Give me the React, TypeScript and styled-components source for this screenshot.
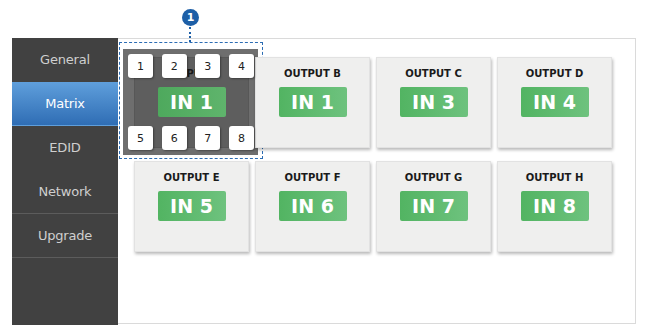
import styled, { createGlobalStyle } from "styled-components";

const menu = ["General", "Matrix", "EDID", "Network", "Upgrade"];
const outputs = [
  { name: "A", input: 1 },
  { name: "B", input: 1 },
  { name: "C", input: 3 },
  { name: "D", input: 4 },
  { name: "E", input: 5 },
  { name: "F", input: 6 },
  { name: "G", input: 7 },
  { name: "H", input: 8 },
];

export default function App() {
  return (
    <>
      <GlobalStyle />
      <Page>
        <Sidebar>
          {menu.map((item) => (
            <MenuItem
              key={item}
              $active={item === "Matrix"}
              $divided={item === "Network" || item === "Upgrade"}
            >
              {item}
            </MenuItem>
          ))}
        </Sidebar>
        <Panel>
          <Grid>
            {outputs.map((o, i) => (
              <Slot key={o.name}>
                <Card $selected={i === 0}>
                  <Title>OUTPUT {o.name}</Title>
                  <Badge $selected={i === 0}>IN {o.input}</Badge>
                </Card>
                {i === 0 && (
                  <Selection>
                    <Marker>1</Marker>
                    <Frame>
                      <ButtonRow>
                        {[1, 2, 3, 4].map((n) => (
                          <InputButton key={n}>{n}</InputButton>
                        ))}
                      </ButtonRow>
                      <ButtonRow>
                        {[5, 6, 7, 8].map((n) => (
                          <InputButton key={n}>{n}</InputButton>
                        ))}
                      </ButtonRow>
                    </Frame>
                  </Selection>
                )}
              </Slot>
            ))}
          </Grid>
        </Panel>
      </Page>
    </>
  );
}

const GlobalStyle = createGlobalStyle`
  body {
    margin: 0;
    background: #ffffff;
    font-family: "DejaVu Sans", Verdana, sans-serif;
  }
`;

const Page = styled.div`
  display: flex;
  width: 650px;
  height: 335px;
  box-sizing: border-box;
  padding: 38px 0 10px 12px;
`;

const Sidebar = styled.nav`
  width: 106px;
  height: 287px;
  background: #414141;
  display: flex;
  flex-direction: column;
`;

const MenuItem = styled.div<{ $active?: boolean; $divided?: boolean }>`
  height: 44px;
  box-sizing: border-box;
  display: flex;
  align-items: center;
  justify-content: center;
  font-size: 13px;
  letter-spacing: -0.2px;
  color: ${(p) => (p.$active ? "#ffffff" : "#cfcfcf")};
  background: ${(p) =>
    p.$active ? "linear-gradient(to bottom, #5f9fdc, #2f6db4)" : "transparent"};
  border-bottom: 1px solid ${(p) => (p.$divided ? "#5c5c5c" : "transparent")};
`;

const Panel = styled.main`
  width: 518px;
  height: 286px;
  box-sizing: border-box;
  background: #ffffff;
  border: 1px solid #dadada;
  border-left: none;
  padding: 18px 0 0 16px;
`;

const Grid = styled.div`
  display: grid;
  grid-template-columns: repeat(4, 115px);
  grid-auto-rows: 91px;
  column-gap: 6px;
  row-gap: 13px;
`;

const Slot = styled.div`
  position: relative;
`;

const Card = styled.div<{ $selected?: boolean }>`
  position: relative;
  z-index: 1;
  height: 100%;
  box-sizing: border-box;
  display: flex;
  flex-direction: column;
  align-items: center;
  padding-top: 10px;
  background: ${(p) => (p.$selected ? "#5e5e5e" : "#efefee")};
  border: 1px solid ${(p) => (p.$selected ? "#575757" : "#e2e2e2")};
  box-shadow: ${(p) =>
    p.$selected ? "none" : "1px 2px 3px rgba(0, 0, 0, 0.28)"};
`;

const Title = styled.div`
  font-size: 10px;
  font-weight: bold;
  color: #1a1a1a;
  line-height: 12px;
`;

const Badge = styled.div<{ $selected?: boolean }>`
  margin-top: 7px;
  width: 68px;
  height: 30px;
  border-radius: 2px;
  display: flex;
  align-items: center;
  justify-content: center;
  font-size: 19px;
  font-weight: bold;
  color: #ffffff;
  background: ${(p) =>
    p.$selected
      ? "linear-gradient(to right, #4ea95d, #5fb46c)"
      : "linear-gradient(to right, #52b462, #6ec27e)"};
`;

const Selection = styled.div`
  position: absolute;
  top: -15px;
  left: -15px;
  width: 144px;
  height: 117px;
  box-sizing: border-box;
  border: 1px dashed #2b6cb3;
  padding: 6px 4px 3px 3px;
`;

const Marker = styled.div`
  position: absolute;
  left: 62px;
  top: -34px;
  width: 17px;
  height: 17px;
  border-radius: 50%;
  background: #1d5fa7;
  color: #ffffff;
  font-size: 11px;
  font-weight: bold;
  display: flex;
  align-items: center;
  justify-content: center;

  &::after {
    content: "";
    position: absolute;
    left: 7px;
    top: 18px;
    height: 15px;
    border-left: 2px dotted #1d5fa7;
  }
`;

const Frame = styled.div`
  height: 100%;
  box-sizing: border-box;
  background: #6e6e6e;
  display: flex;
  flex-direction: column;
  justify-content: space-between;
  padding: 5px 4px 5px 5px;
`;

const ButtonRow = styled.div`
  display: flex;
  justify-content: space-between;
`;

const InputButton = styled.div`
  position: relative;
  z-index: 2;
  width: 25px;
  height: 24px;
  border-radius: 3px;
  background: #ffffff;
  box-shadow: 1px 1px 2px rgba(0, 0, 0, 0.35);
  display: flex;
  align-items: center;
  justify-content: center;
  font-size: 11px;
  color: #222222;
`;
